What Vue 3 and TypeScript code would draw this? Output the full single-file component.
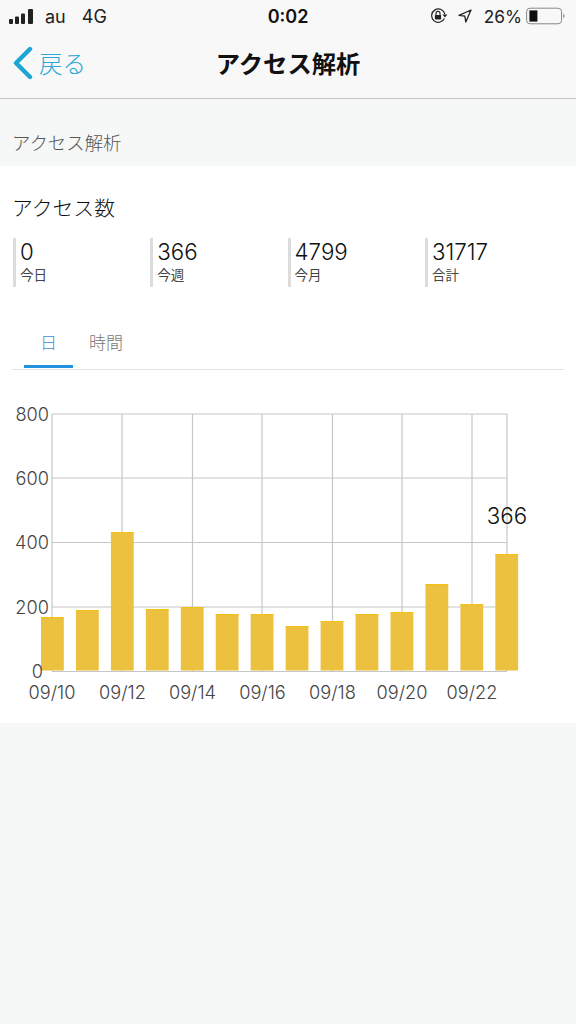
<script setup lang="ts">
const stats = [
  { value: '0', label: '今日' },
  { value: '366', label: '今週' },
  { value: '4799', label: '今月' },
  { value: '31717', label: '合計' },
]
const tops = [617, 610, 532, 609, 607, 614, 614, 626, 621, 614, 612, 584, 604, 554]
const bars = tops.map((top, i) => ({ x: 41 + i * 34.95, y: top, h: 670.5 - top }))
const yTicks = [
  { y: 414, label: '800' },
  { y: 478, label: '600' },
  { y: 542.5, label: '400' },
  { y: 607, label: '200' },
]
const vLines = [122, 192.5, 262, 332.5, 402, 472, 507]
const xLabels = [
  { x: 52, label: '09/10' },
  { x: 122.5, label: '09/12' },
  { x: 192.5, label: '09/14' },
  { x: 262.5, label: '09/16' },
  { x: 332.5, label: '09/18' },
  { x: 402, label: '09/20' },
  { x: 472, label: '09/22' },
]
</script>

<template>
  <div class="page">
    <header class="topbar">
      <div class="status">
        <div class="status-left">
          <svg width="26" height="15" viewBox="0 0 26 15" class="signal">
            <rect x="0" y="10" width="4" height="5" rx="1" />
            <rect x="6" y="7.5" width="4" height="7.5" rx="1" />
            <rect x="12" y="4.5" width="4" height="10.5" rx="1" />
            <rect x="19" y="0" width="5" height="15" rx="1" />
          </svg>
          <span class="carrier">au</span>
          <span class="net">4G</span>
        </div>
        <div class="clock">0:02</div>
        <div class="status-right">
          <svg width="18" height="16" viewBox="0 0 18 16" fill="none" stroke="#222">
            <path d="M14.9 6.2A6.7 6.7 0 1 0 14.4 10.6" stroke-width="1.2" />
            <path d="M17.4 6.4h-5l2.5 3z" fill="#222" stroke="none" />
            <rect x="4.9" y="7" width="6.2" height="4.4" rx="0.6" fill="#222" stroke="none" />
            <path d="M6 7V5.4a2 2 0 0 1 4 0V7" stroke-width="1.1" />
          </svg>
          <svg class="arrow" width="14" height="14" viewBox="0 0 14 14" fill="none" stroke="#222" stroke-width="1.3" stroke-linejoin="round">
            <path d="M13 1L1 6.3l5.8.8 1 5.9z" />
          </svg>
          <span class="pct">26%</span>
          <svg width="39" height="18" viewBox="0 0 39 18" fill="none">
            <rect x="0.6" y="1.2" width="35" height="15.6" rx="3.6" stroke="#888" stroke-width="1" />
            <rect x="3.4" y="3.4" width="8" height="11.2" fill="#111" />
            <path d="M37.2 6.8c1 .4 1.4 1.2 1.4 2.2s-.4 1.8-1.4 2.2z" fill="#999" />
          </svg>
        </div>
      </div>
      <nav class="nav">
        <a class="back">
          <svg width="20" height="34" viewBox="0 0 20 34" fill="none" stroke="#1ba6d3" stroke-width="4.4" stroke-linecap="round" stroke-linejoin="round">
            <path d="M17 3L3 17l14 14" />
          </svg>
          <span>戻る</span>
        </a>
        <h1>アクセス解析</h1>
      </nav>
    </header>

    <div class="section-head">アクセス解析</div>

    <main class="card">
      <h2>アクセス数</h2>
      <div class="stats">
        <div v-for="s in stats" :key="s.label" class="stat">
          <div class="stat-value">{{ s.value }}</div>
          <div class="stat-label">{{ s.label }}</div>
        </div>
      </div>

      <div class="tabs">
        <div class="tab active">日</div>
        <div class="tab">時間</div>
      </div>

      <svg class="chart" width="576" height="334" viewBox="0 390 576 334">
        <g stroke="#c6c6c6" stroke-width="1.2">
          <line v-for="t in yTicks" :key="t.y" x1="52" x2="507" :y1="t.y" :y2="t.y" />
          <line x1="52" x2="52" y1="414" y2="671" />
          <line v-for="x in vLines" :key="x" :x1="x" :x2="x" y1="414" y2="671" />
          <line x1="52" x2="507" y1="671.5" y2="671.5" />
        </g>
        <g v-for="(b, i) in bars" :key="i">
          <rect :x="b.x" :y="b.y" width="22.8" :height="b.h" fill="#ecc13f" />
          <rect :x="b.x" :y="b.y" width="22.8" height="1" fill="#f3c112" />
        </g>
        <g class="axis">
          <text v-for="t in yTicks" :key="t.label" x="49" :y="t.y + 6.5" text-anchor="end">{{ t.label }}</text>
          <text x="43" y="677.5" text-anchor="end">0</text>
          <text v-for="l in xLabels" :key="l.label" :x="l.x" y="699" text-anchor="middle">{{ l.label }}</text>
        </g>
        <text class="peak" x="507" y="524" text-anchor="middle">366</text>
      </svg>
    </main>
  </div>
</template>

<style scoped>
.page {
  width: 576px;
  height: 1024px;
  background: #f6f8f8;
  font-family: Inter, "Noto Sans CJK JP", sans-serif;
  overflow: hidden;
}
.topbar {
  height: 99px;
  box-sizing: border-box;
  background: #f8f8f8;
  border-bottom: 1px solid #c4c4c4;
}
.status {
  height: 32px;
  display: flex;
  align-items: center;
  justify-content: space-between;
  position: relative;
  padding: 0 11px 0 9px;
  color: #222;
  font-size: 18px;
}
.status-left {
  display: flex;
  align-items: center;
}
.signal {
  fill: #222;
  margin-right: 10px;
}
.carrier {
  margin-right: 16px;
}
.clock {
  position: absolute;
  left: 0;
  right: 0;
  text-align: center;
  font-size: 18px;
  font-weight: 600;
  color: #111;
  pointer-events: none;
}
.status-right {
  display: flex;
  align-items: center;
}
.arrow {
  margin-left: 10px;
  margin-right: 12px;
}
.pct {
  font-size: 17.3px;
  margin-right: 4px;
}
.nav {
  height: 60px;
  position: relative;
  display: flex;
  align-items: center;
  justify-content: center;
}
.back {
  position: absolute;
  left: 13px;
  top: 14px;
  display: flex;
  align-items: center;
  gap: 6px;
  color: #2aa8d6;
  font-size: 23.5px;
  font-weight: 300;
}
.nav h1 {
  margin: 0;
  font-size: 24.3px;
  font-weight: 700;
  color: #111;
}
.section-head {
  height: 67px;
  box-sizing: border-box;
  padding: 31px 13px 0;
  font-size: 18.4px;
  line-height: 27px;
  color: #555;
  font-weight: 300;
  margin-left: -1px;
}
.card {
  background: #fff;
  height: 557px;
  padding-top: 27px;
  box-sizing: border-box;
}
.card h2 {
  margin: 0 0 0 12px;
  font-size: 20.8px;
  line-height: 32px;
  font-weight: 300;
  color: #111;
}
.stats {
  display: grid;
  grid-template-columns: repeat(4, 137.3px);
  margin: 13px 0 0 13px;
}
.stat {
  height: 49px;
  border-left: 3px solid #dcdcdc;
  padding-left: 5px;
}
.stat-value {
  font-size: 22.3px;
  line-height: 28px;
  color: #111;
  font-weight: 300;
  margin-left: -1px;
}
.stat-label {
  font-size: 13.5px;
  line-height: 18px;
  color: #444;
  margin-left: -1px;
}
.tabs {
  display: flex;
  margin: 37px 12px 0;
  padding-left: 12px;
  height: 46px;
  box-sizing: border-box;
  border-bottom: 1px solid #dde3e6;
}
.tab {
  width: 49px;
  height: 44px;
  text-align: center;
  font-size: 17px;
  line-height: 39px;
  color: #777;
  font-weight: 300;
}
.tab.active {
  color: #3f8fd0;
  box-shadow: inset 0 -3px 0 #2192db;
}
.tab + .tab {
  margin-left: 16px;
  width: 33px;
  white-space: nowrap;
}
.chart {
  display: block;
  margin-top: 20px;
}
.axis {
  font-size: 18.2px;
  fill: #444;
  font-weight: 300;
}
.peak {
  font-size: 22.3px;
  fill: #111;
  font-weight: 300;
}
</style>
